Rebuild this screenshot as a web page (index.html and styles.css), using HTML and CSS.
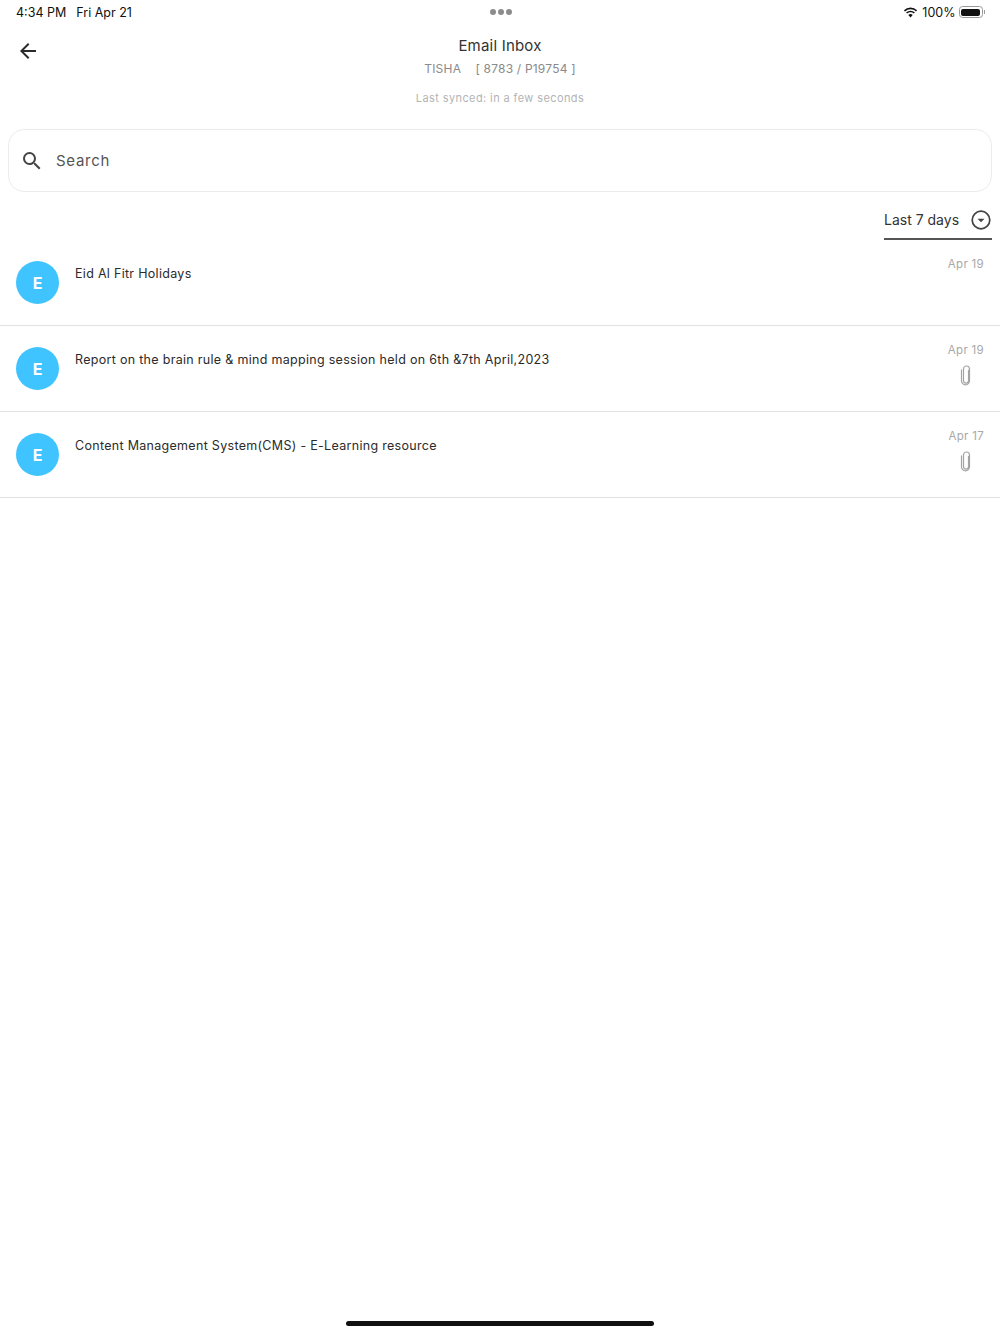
FILE: index.html
```html
<!DOCTYPE html>
<html lang="en">
<head>
    <meta charset="UTF-8">
    <title>Email Inbox</title>
    <link rel="stylesheet" href="styles.css">
</head>
<body>

<div class="status-bar">
    <div class="status-time">
        <span>4:34 PM</span>
        <span>Fri Apr 21</span>
    </div>
    <div class="status-dots"><i></i><i></i><i></i></div>
    <div class="status-right">
        <svg class="wifi" width="15" height="11" viewBox="0 0 15 11">
            <path d="M7.5 2.2c2.1 0 4 .8 5.5 2.2l1.1-1.2A9.6 9.6 0 0 0 7.5.5 9.600 9.600 0 0 0 .9 3.200L2 4.400a8 8 0 0 1 5.500-2.200z" fill="#111"/>
            <path d="M7.500 5.300c1.300 0 2.400.5 3.300 1.300l1.100-1.200a6.400 6.400 0 0 0-8.800 0l1.100 1.200c.9-.8 2-1.300 3.300-1.300z" fill="#111"/>
            <path d="M7.500 10.500l2.200-2.400a3.100 3.100 0 0 0-4.400 0z" fill="#111"/>
        </svg>
        <span>100%</span>
        <div class="battery"><div class="battery-fill"></div></div>
        <div class="battery-tip"></div>
    </div>
</div>

<div class="header">
    <button class="back">
        <svg width="24" height="24" viewBox="0 0 24 24">
            <path d="M20 11H7.830l5.590-5.590L12 4l-8 8 8 8 1.410-1.410L7.830 13H20z" fill="#2b2b2b"/>
        </svg>
    </button>
    <div class="title">Email Inbox</div>
    <div class="subtitle">TISHA &nbsp;&nbsp; [ 8783 / P19754 ]</div>
    <div class="synced">Last synced: in a few seconds</div>
</div>

<div class="search">
    <svg width="24" height="24" viewBox="0 0 24 24">
        <path d="M15.500 14h-.790l-.280-.270A6.470 6.470 0 0 0 16 9.500 6.500 6.500 0 1 0 9.500 16c1.610 0 3.090-.590 4.230-1.570l.270.280v.790l5 4.990L20.490 19l-4.990-5zm-6 0C7.010 14 5 11.990 5 9.500S7.010 5 9.500 5 14 7.010 14 9.500 11.990 14 9.500 14z" fill="#444"/>
    </svg>
    <span>Search</span>
</div>

<div class="filter-row">
    <div class="filter">
        <span>Last 7 days</span>
        <svg width="22" height="22" viewBox="0 0 22 22">
            <circle cx="11" cy="11" r="8.800" fill="none" stroke="#444" stroke-width="1.700"/>
            <path d="M7.500 9.700h7L11 13.300z" fill="#444"/>
        </svg>
    </div>
</div>

<div class="mail-list">
    <div class="mail-row">
        <div class="avatar">E</div>
        <div class="mail-subject">Eid Al Fitr Holidays</div>
        <div class="mail-meta">
            <span class="mail-date">Apr 19</span>
        </div>
    </div>
    <div class="mail-row">
        <div class="avatar">E</div>
        <div class="mail-subject">Report on the brain rule &amp; mind mapping session held on 6th &amp;7th April,2023</div>
        <div class="mail-meta">
            <span class="mail-date">Apr 19</span>
            <svg class="clip" width="14" height="22" viewBox="0 0 14 22">
                <path d="M9.500 5.500v10.300a2.500 2.500 0 0 1-5 0V4.200a3 3 0 0 1 6 0v11.800a4 4 0 0 1-8 0V5" transform="translate(0 .8)" fill="none" stroke="#a3a3a3" stroke-width="1.200" stroke-linecap="round"/>
            </svg>
        </div>
    </div>
    <div class="mail-row">
        <div class="avatar">E</div>
        <div class="mail-subject">Content Management System(CMS) - E-Learning resource</div>
        <div class="mail-meta">
            <span class="mail-date">Apr 17</span>
            <svg class="clip" width="14" height="22" viewBox="0 0 14 22">
                <path d="M9.500 5.500v10.300a2.500 2.500 0 0 1-5 0V4.200a3 3 0 0 1 6 0v11.800a4 4 0 0 1-8 0V5" transform="translate(0 .8)" fill="none" stroke="#a3a3a3" stroke-width="1.200" stroke-linecap="round"/>
            </svg>
        </div>
    </div>
</div>

<div class="home-bar"></div>

</body>
</html>
```

FILE: styles.css
```css
* {
    box-sizing: border-box;
}
html, body {
    height: 100%;
}
body {
    margin: 0;
    background-color: #fff;
    color: #2b2b2b;
    font-family: Inter, "Liberation Sans", sans-serif;
    display: flex;
    flex-direction: column;
    min-height: 1334px;
}
/* status bar */
.status-bar {
    height: 24px;
    padding: 0 15px 0 16px;
    display: flex;
    align-items: center;
    justify-content: space-between;
    font-size: 12.500px;
    color: #111;
}
.status-time {
    display: flex;
    gap: 10px;
    width: 200px;
}
.status-dots {
    display: flex;
    gap: 2px;
}
.status-dots i {
    width: 6px;
    height: 6px;
    border-radius: 50%;
    background-color: #8c8c8c;
}
.status-right {
    width: 200px;
    display: flex;
    align-items: center;
    justify-content: flex-end;
}
.wifi {
    margin-right: 4px;
}
.battery {
    width: 24px;
    height: 12px;
    margin-left: 3px;
    padding: 1.500px;
    border: 1px solid #999;
    border-radius: 3.500px;
}
.battery-fill {
    height: 100%;
    border-radius: 2px;
    background-color: #111;
}
.battery-tip {
    width: 1.500px;
    height: 4px;
    margin-left: 1px;
    background-color: #999;
}
/* header */
.header {
    position: relative;
    height: 105px;
    padding-top: 13px;
    text-align: center;
}
.back {
    position: absolute;
    left: 16px;
    top: 15px;
    padding: 0;
    border: none;
    background: none;
    line-height: 0;
}
.title {
    font-size: 15px;
    line-height: 18px;
    letter-spacing: 0.200px;
    color: #333;
}
.subtitle {
    margin-top: 6px;
    font-size: 12px;
    line-height: 15px;
    letter-spacing: 0.200px;
    color: #8a8a8a;
}
.synced {
    margin-top: 15px;
    font-size: 11px;
    line-height: 14px;
    letter-spacing: 0.400px;
    color: #b4b4b4;
}
/* search */
.search {
    margin: 0 8px;
    height: 63px;
    padding-left: 11px;
    display: flex;
    align-items: center;
    gap: 12px;
    border: 1px solid #ececec;
    border-radius: 16px;
    font-size: 15px;
    letter-spacing: 0.700px;
    color: #555;
}
/* filter */
.filter-row {
    display: flex;
    justify-content: flex-end;
    padding: 17px 8px 0 0;
}
.filter {
    width: 108px;
    height: 31px;
    display: flex;
    align-items: flex-start;
    justify-content: space-between;
    border-bottom: 2px solid #555;
    font-size: 14px;
    line-height: 22px;
    color: #333;
}
/* list */
.mail-row {
    height: 86px;
    padding: 0 16px;
    display: flex;
    border-bottom: 1.500px solid #e2e2e2;
}
.avatar {
    width: 43px;
    height: 43px;
    margin-top: 21px;
    flex-shrink: 0;
    display: flex;
    align-items: center;
    justify-content: center;
    border-radius: 50%;
    background-color: #40c4ff;
    color: #fff;
    font-size: 16px;
    font-weight: 700;
}
.mail-subject {
    flex: 1;
    margin: 26px 0 0 16px;
    font-size: 12.500px;
    line-height: 16px;
    letter-spacing: 0.300px;
    color: #2b2b2b;
}
.mail-meta {
    display: flex;
    flex-direction: column;
    align-items: center;
    padding-top: 17px;
    gap: 7px;
}
.mail-date {
    font-size: 11.500px;
    line-height: 14px;
    letter-spacing: 0.300px;
    color: #a8a8a8;
}
/* home indicator */
.home-bar {
    width: 308px;
    height: 5px;
    margin: auto auto 8px;
    border-radius: 3px;
    background-color: #111;
}
```
